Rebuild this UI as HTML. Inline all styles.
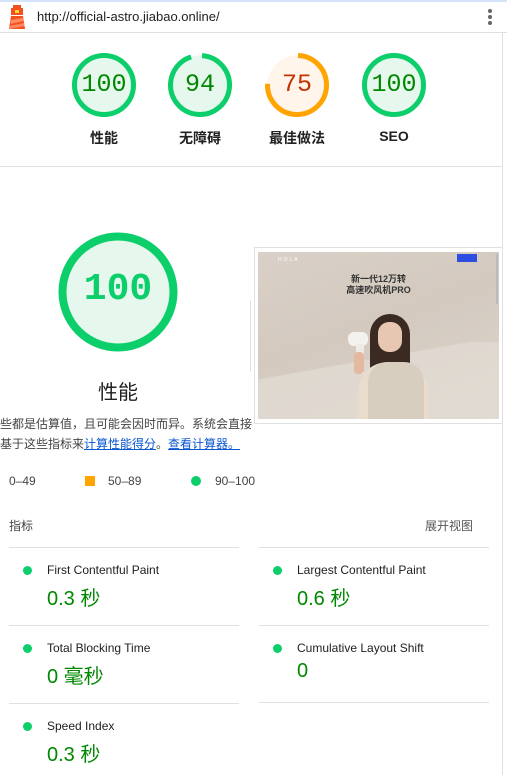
<!DOCTYPE html>
<html><head><meta charset="utf-8"><style>
*{margin:0;padding:0;box-sizing:border-box}
body{width:507px;height:775px;overflow:hidden;background:#fff;position:relative;font-family:"Liberation Sans","Noto Sans CJK SC",sans-serif;color:#212121}
.a{position:absolute}
.g{position:absolute;width:64px;height:64px}
.gl{position:absolute;width:100px;text-align:center;font-size:14px;font-weight:bold;color:#212121}
.gn{position:absolute;left:0;top:0;width:64px;line-height:64px;text-align:center;font-family:"Liberation Mono",monospace;font-size:25px}
.hr{position:absolute;height:1px;background:#e0e0e0}
.dot{position:absolute;width:9px;height:9px;border-radius:50%;background:#0cce6b}
.ml{position:absolute;font-size:12px;color:#212121}
.mv{position:absolute;font-size:20px;color:#008800}
</style></head><body>
<div class="a" style="left:0;top:0;width:507px;height:2px;background:#d6e4fb"></div>
<svg class="a" style="left:8px;top:5px" width="18" height="25" viewBox="0 0 18 25">
<rect x="5" y="0" width="8" height="3" fill="#f4511e"/>
<rect x="3" y="3" width="12" height="7" fill="#f4511e"/>
<rect x="7" y="5" width="4" height="3" fill="#fdd835"/>
<polygon points="3,11 15,11 17,24 1,24" fill="#f4511e"/>
<polygon points="3,15 15,13 15.5,16 2.5,19" fill="#ff8a65"/>
<polygon points="2,21 16,18 16.5,21 1.5,24" fill="#ff8a65"/>
</svg>
<div class="a" style="left:37px;top:9px;font-size:13px;color:#212121">http://official-astro.jiabao.online/</div>
<div class="a" style="left:488px;top:9px;width:4px;height:4px;border-radius:50%;background:#666"></div>
<div class="a" style="left:488px;top:15px;width:4px;height:4px;border-radius:50%;background:#666"></div>
<div class="a" style="left:488px;top:21px;width:4px;height:4px;border-radius:50%;background:#666"></div>
<div class="hr" style="left:0;top:32px;width:507px"></div>
<div class="a" style="left:502px;top:33px;width:1px;height:742px;background:#e0e0e0"></div>

<svg class="g" style="left:72px;top:53px" viewBox="0 0 64 64"><circle cx="32" cy="32" r="29.5" fill="#e6f7ed" stroke="#0cce6b" stroke-width="5"/></svg>
<div class="gn" style="left:72px;top:53px;color:#008800">100</div>
<svg class="g" style="left:168px;top:53px" viewBox="0 0 64 64"><circle cx="32" cy="32" r="29.5" fill="#e6f7ed"/><circle cx="32" cy="32" r="29.5" fill="none" stroke="#0cce6b" stroke-width="5" stroke-dasharray="174 200" transform="rotate(-86 32 32)"/></svg>
<div class="gn" style="left:168px;top:53px;color:#008800">94</div>
<svg class="g" style="left:265px;top:53px" viewBox="0 0 64 64"><circle cx="32" cy="32" r="29.5" fill="#fff5ea"/><circle cx="32" cy="32" r="29.5" fill="none" stroke="#ffa400" stroke-width="5" stroke-dasharray="139 200" transform="rotate(-88 32 32)"/></svg>
<div class="gn" style="left:265px;top:53px;color:#c33300">75</div>
<svg class="g" style="left:362px;top:53px" viewBox="0 0 64 64"><circle cx="32" cy="32" r="29.5" fill="#e6f7ed" stroke="#0cce6b" stroke-width="5"/></svg>
<div class="gn" style="left:362px;top:53px;color:#008800">100</div>
<div class="gl" style="left:54px;top:128px">性能</div>
<div class="gl" style="left:150px;top:128px">无障碍</div>
<div class="gl" style="left:247px;top:128px">最佳做法</div>
<div class="gl" style="left:344px;top:128px">SEO</div>
<div class="hr" style="left:0;top:166px;width:502px"></div>

<svg class="a" style="left:58px;top:232px" width="120" height="120" viewBox="0 0 120 120"><circle cx="60" cy="60" r="55.5" fill="#e6f7ed" stroke="#0cce6b" stroke-width="8"/></svg>
<div class="a" style="left:58px;top:232px;width:120px;line-height:116px;text-align:center;font-family:'Liberation Mono',monospace;font-size:38px;font-weight:bold;color:#0cce6b">100</div>
<div class="a" style="left:68px;top:376px;width:100px;text-align:center;font-size:20px;color:#212121">性能</div>
<div class="a" style="left:0;top:414px;font-size:12px;line-height:20px;color:#444;white-space:nowrap">些都是估算值，且可能会因时而异。系统会直接<br>基于这些指标来<span style="color:#0b57d0;text-decoration:underline">计算性能得分</span>。<span style="color:#0b57d0;text-decoration:underline">查看计算器。</span></div>
<div class="a" style="left:250px;top:300px;width:1px;height:72px;background:#e0e0e0"></div>

<div class="a" style="left:254px;top:247px;width:249px;height:177px;border:1px solid #e0e0e0;background:#fff"></div>
<div class="a" style="left:258px;top:252px;width:241px;height:167px;background:linear-gradient(160deg,#d9d0c7 0%,#d3c9bf 45%,#ddd5cc 100%);overflow:hidden">
 <div class="a" style="left:0;top:90px;width:241px;height:80px;background:linear-gradient(170deg,transparent 30%,#e3ddd5 31%);opacity:.7"></div>
 <div class="a" style="left:20px;top:5px;font-size:5px;color:#fff;letter-spacing:2px">HOLA</div>
 <div class="a" style="left:199px;top:2px;width:20px;height:8px;background:#2d4ee0"></div>
 <div class="a" style="left:0;top:22px;width:241px;text-align:center;font-size:9px;font-weight:bold;line-height:11px;color:#333">新一代12万转<br>高速吹风机PRO</div>
 <div class="a" style="left:112px;top:62px;width:40px;height:60px;border-radius:20px 20px 8px 8px;background:#3a2a22"></div>
 <div class="a" style="left:120px;top:70px;width:24px;height:30px;border-radius:11px;background:#e8c7b2"></div>
 <div class="a" style="left:100px;top:110px;width:70px;height:60px;border-radius:30px 30px 0 0;background:#e9dccd"></div>
 <div class="a" style="left:110px;top:110px;width:56px;height:60px;border-radius:20px 20px 0 0;background:#d8cebf"></div>
 <div class="a" style="left:90px;top:80px;width:20px;height:14px;border-radius:6px;background:#f4f2ee"></div>
 <div class="a" style="left:98px;top:92px;width:8px;height:30px;background:#efebe4"></div>
 <div class="a" style="left:96px;top:100px;width:10px;height:22px;border-radius:4px;background:#e4b9a0"></div>
</div>
<div class="a" style="left:496px;top:254px;width:2px;height:50px;background:#bbb"></div>

<div class="a" style="left:9px;top:474px;font-size:12px;color:#444">0–49</div>
<div class="a" style="left:85px;top:476px;width:10px;height:10px;background:#ffa400"></div>
<div class="a" style="left:108px;top:474px;font-size:12px;color:#444">50–89</div>
<div class="a" style="left:191px;top:476px;width:10px;height:10px;border-radius:50%;background:#0cce6b"></div>
<div class="a" style="left:215px;top:474px;font-size:12px;color:#444">90–100</div>

<div class="a" style="left:9px;top:517px;font-size:12px;color:#444">指标</div>
<div class="a" style="left:425px;top:517px;font-size:12px;color:#555">展开视图</div>
<div class="hr" style="left:9px;top:547px;width:230px"></div>
<div class="hr" style="left:259px;top:547px;width:230px"></div>
<div class="hr" style="left:9px;top:625px;width:230px"></div>
<div class="hr" style="left:259px;top:625px;width:230px"></div>
<div class="hr" style="left:9px;top:703px;width:230px"></div>
<div class="hr" style="left:259px;top:702px;width:230px"></div>

<div class="dot" style="left:23px;top:566px"></div><div class="ml" style="left:47px;top:563px">First Contentful Paint</div><div class="mv" style="left:47px;top:582px">0.3 秒</div>
<div class="dot" style="left:273px;top:566px"></div><div class="ml" style="left:297px;top:563px">Largest Contentful Paint</div><div class="mv" style="left:297px;top:582px">0.6 秒</div>
<div class="dot" style="left:23px;top:644px"></div><div class="ml" style="left:47px;top:641px">Total Blocking Time</div><div class="mv" style="left:47px;top:660px">0 毫秒</div>
<div class="dot" style="left:273px;top:644px"></div><div class="ml" style="left:297px;top:641px">Cumulative Layout Shift</div><div class="mv" style="left:297px;top:660px">0</div>
<div class="dot" style="left:23px;top:722px"></div><div class="ml" style="left:47px;top:719px">Speed Index</div><div class="mv" style="left:47px;top:738px">0.3 秒</div>
</body></html>
